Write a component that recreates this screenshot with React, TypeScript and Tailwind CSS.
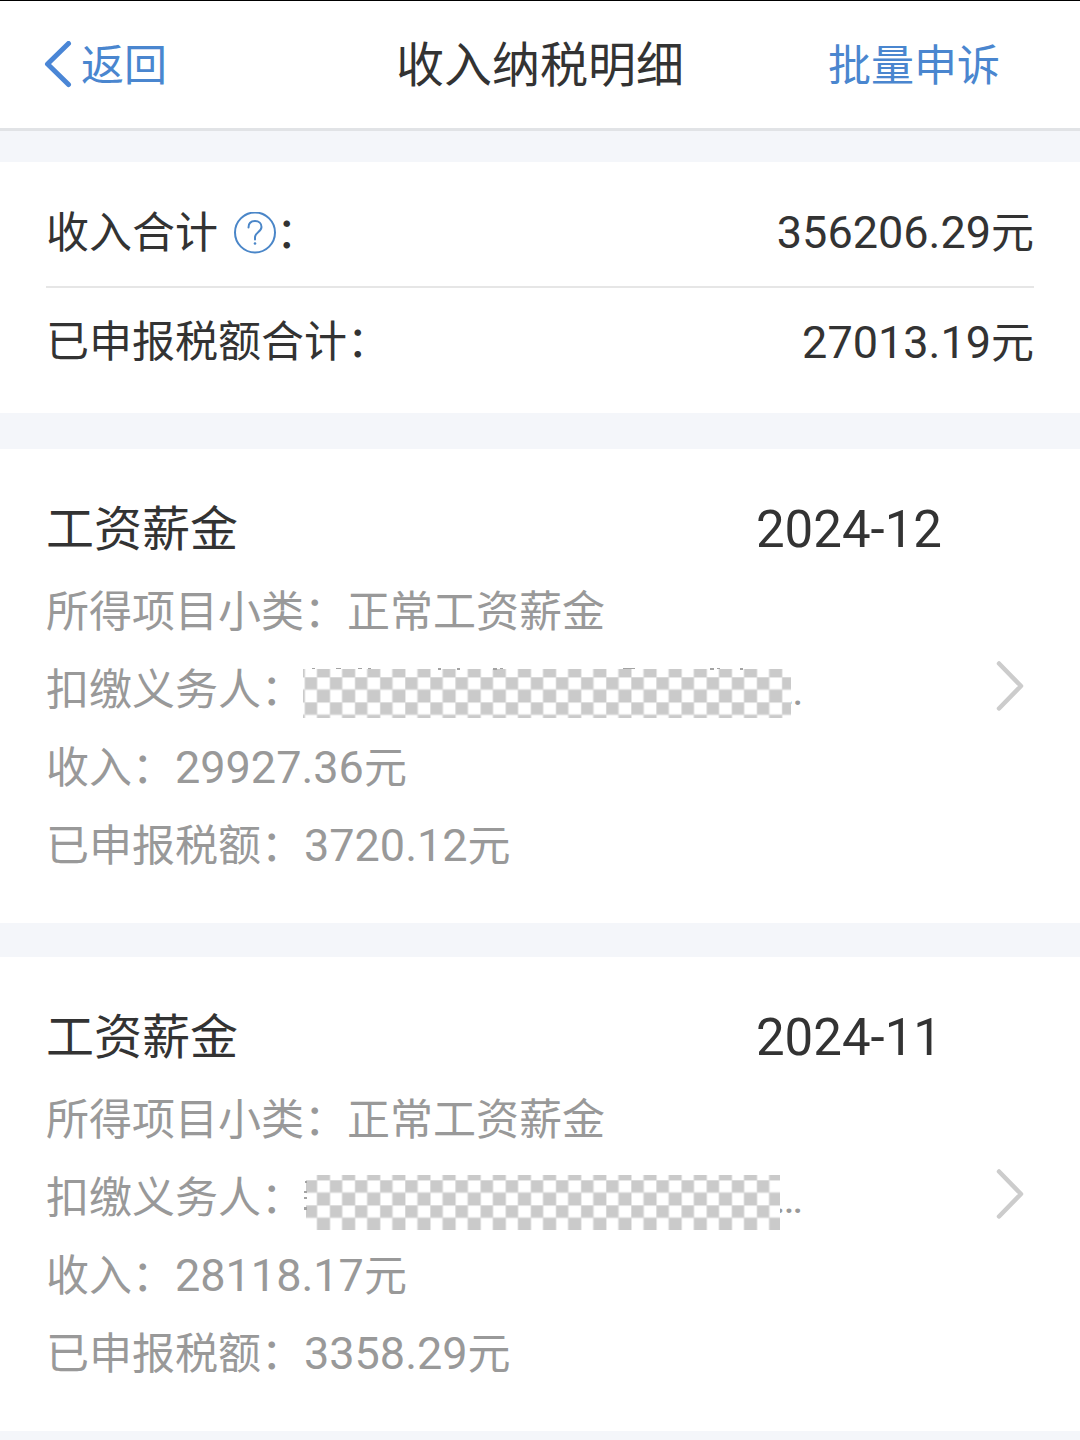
import { useId } from "react";

type Mosaic = { x: number; y: number; w: number; h: number; phase: number; specks: number[][] };

type Income = {
  month: string;
  title: string;
  category: string;
  income: string;
  tax: string;
  mosaic: Mosaic;
};

const records: Income[] = [
  {
    month: "2024-12",
    title: "工资薪金",
    category: "正常工资薪金",
    income: "29927.36",
    tax: "3720.12",
    mosaic: {
      x: 0, y: 2, w: 488, h: 49, phase: 10,
      specks: [[9, 1, 3, 1], [33, 1, 5, 1], [55, 1, 4, 1], [65, 1, 3, 1], [135, 1, 3, 2], [154, 1, 3, 2], [190, 1, 4, 2], [197, 1, 3, 1], [320, 1, 12, 1], [407, 1, 4, 2], [414, 1, 3, 1], [437, 1, 3, 2]],
    },
  },
  {
    month: "2024-11",
    title: "工资薪金",
    category: "正常工资薪金",
    income: "28118.17",
    tax: "3358.29",
    mosaic: {
      x: 3, y: 0, w: 474, h: 55, phase: 5,
      specks: [[2, 6, 2, 2], [1, 16, 3, 2], [1, 22, 3, 2], [1, 32, 3, 3]],
    },
  },
];

function Redacted({ mosaic }: { mosaic: Mosaic }) {
  const id = useId();
  const { x, y, w, h, phase, specks } = mosaic;
  return (
    <svg width="488" height="56" viewBox="0 0 488 56" className="absolute -left-px top-4" aria-hidden="true">
      <defs>
        <pattern id={id} x="1.5" y={phase} width="25.12" height="25.12" patternUnits="userSpaceOnUse">
          <rect width="25.12" height="25.12" fill="#fff" />
          <rect width="12.56" height="12.56" fill="#cacaca" />
          <rect x="12.56" y="12.56" width="12.56" height="12.56" fill="#cacaca" />
          <path d="M0 .3H25.12M0 12.56H25.12M.3 0V25.12M12.56 0V25.12" stroke="#dedede" strokeWidth=".9" />
        </pattern>
      </defs>
      <rect x={x} y={y} width={w} height={h} fill="#fff" />
      <rect x={x} y={y} width={w} height={h} fill={`url(#${id})`} />
      {specks.map(([sx, sy, sw, sh]) => (
        <rect key={`${sx}-${sy}`} x={sx} y={sy} width={sw} height={sh} fill="#a3a3a3" />
      ))}
    </svg>
  );
}

function Amount({ value }: { value: string }) {
  return (
    <>
      <span className="text-[45px]">{value}</span>元
    </>
  );
}

function IncomeCard({ item }: { item: Income }) {
  return (
    <li className="flex items-center bg-white pt-[37px] pb-[38px] pl-[46px] pr-14">
      <div className="flex-1">
        <div className="flex h-[87px] items-center justify-between leading-[87px] text-[#333]">
          <h2 className="text-[48px]">{item.title}</h2>
          <time className="text-[51px]">{item.month}</time>
        </div>
        <div className="text-[43px] leading-[78px] text-[#999]">
          <p className="h-[78px]">所得项目小类：{item.category}</p>
          <div className="flex h-[78px]">
            <span>扣缴义务人：</span>
            <span className="relative w-[499px] text-right">
              …
              <Redacted mosaic={item.mosaic} />
            </span>
          </div>
          <p className="h-[78px]">收入：<Amount value={item.income} /></p>
          <p className="h-[78px]">已申报税额：<Amount value={item.tax} /></p>
        </div>
      </div>
      <button type="button" aria-label="查看详情" className="flex w-[82px] justify-end">
        <svg width="30" height="52" viewBox="0 0 30 52" fill="none" stroke="#ccc" strokeWidth="4.5" strokeLinecap="round" strokeLinejoin="round">
          <path d="M5 3.500L27 26L5 48.500" />
        </svg>
      </button>
    </li>
  );
}

export default function App() {
  return (
    <div lang="zh-CN" className="min-h-screen bg-[#f4f6fa] font-[Roboto,'Noto_Sans_CJK_SC',sans-serif] text-[43px] text-[#333]">
      <header className="grid h-[131px] grid-cols-[1fr_auto_1fr] items-center border-t border-b-3 border-t-black border-b-[#e1e3e6] bg-white px-11 pt-[3px]">
        <button type="button" className="flex items-center gap-2 text-[#4a86cf]">
          <svg width="29" height="50" viewBox="0 0 29 50" fill="none" stroke="#4a86d6" strokeWidth="5" strokeLinecap="round" strokeLinejoin="round">
            <path d="M24.500 2.500L3.500 23L24.500 43.500" />
          </svg>
          返回
        </button>
        <h1 className="text-[48px]">收入纳税明细</h1>
        <button type="button" className="mr-9 justify-self-end text-[#4a86cf]">批量申诉</button>
      </header>

      <main>
        <dl className="mt-[31px] bg-white px-[46px] pt-[18px] pb-4">
          <div className="flex h-[106px] items-center justify-between">
            <dt className="flex items-center">
              收入合计
              <button type="button" aria-label="说明" className="ml-4">
                <svg width="42" height="42" viewBox="0 0 42 42" fill="none" stroke="#4a86c8" strokeWidth="2" strokeLinecap="round">
                  <circle cx="21" cy="20.500" r="20" />
                  <path d="M14.500 15.500C14.500 11.500 17 9 21 9C25 9 27.500 11.500 27.500 15C27.500 20 21 20.500 21 25V27.500" />
                  <circle cx="21" cy="31.500" r="1.300" fill="#4a86c8" stroke="none" />
                </svg>
              </button>
              ：
            </dt>
            <dd><Amount value="356206.29" /></dd>
          </div>
          <div className="flex h-[111px] items-center justify-between border-t-2 border-[#e6e6e6]">
            <dt>已申报税额合计：</dt>
            <dd><Amount value="27013.19" /></dd>
          </div>
        </dl>

        <ul className="mt-9 flex flex-col gap-[34px]">
          {records.map((r) => (
            <IncomeCard key={r.month} item={r} />
          ))}
        </ul>
      </main>
    </div>
  );
}
